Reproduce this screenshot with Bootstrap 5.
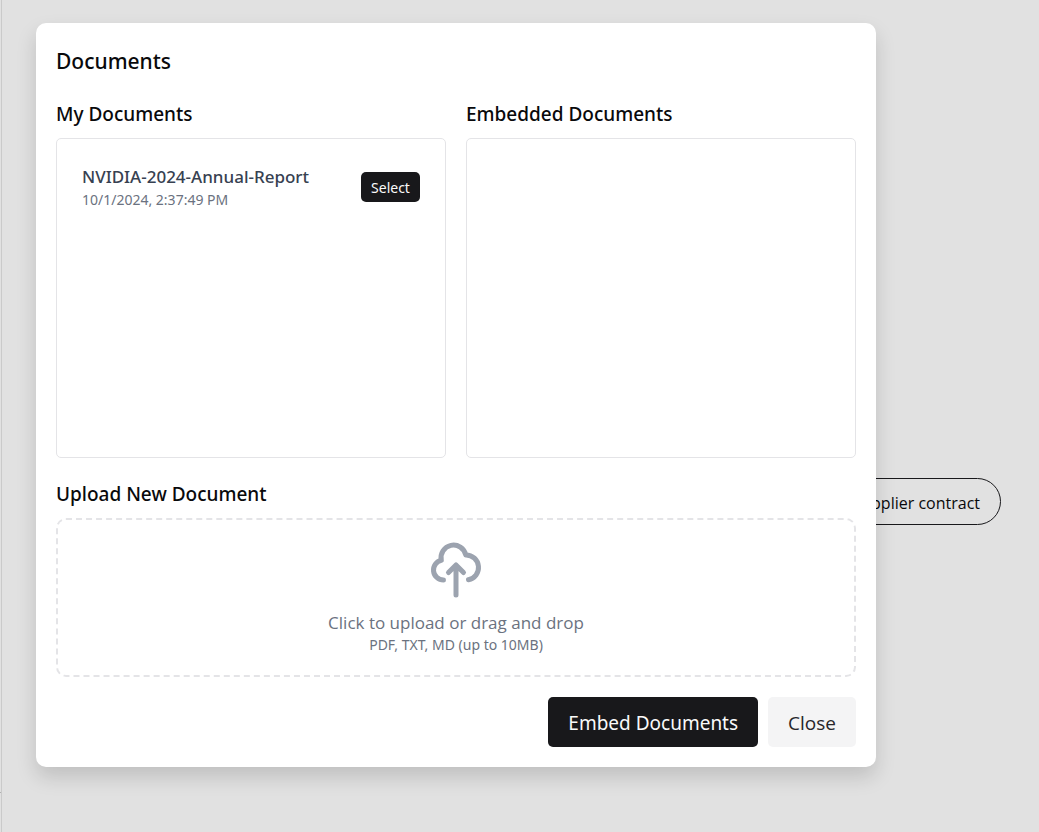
<!DOCTYPE html>
<html lang="en">
<head>
<meta charset="utf-8">
<meta name="viewport" content="width=device-width, initial-scale=1">
<title>Documents</title>
<link href="https://cdn.jsdelivr.net/npm/bootstrap@5.3.0/dist/css/bootstrap.min.css" rel="stylesheet">
<style>
  body { font-family: "Open Sans", "Noto Sans", sans-serif; background: #e1e1e1; color: #09090b; }
  .side-rail { width: 2px; border-right: 1px solid #cacaca; }
  .side-rail hr { margin: 792px 0 0; border-color: #b0b0b0; opacity: 1; }
  .prompts { padding: 478px 38px 0 0; }
  .prompt-pill { height: 47px; padding: 2px 20px 0; border: 1px solid #18181b; font-size: 16px; color: #09090b; }
  .overlay { padding: 23px 36px; }
  .dialog-panel { max-width: 840px; padding: 20px; border-radius: 10px; box-shadow: 0 10px 20px rgba(0,0,0,.15); }
  .dialog-title, .section-title, .doc-name, .doc-date, .drop-hint, .btn-dark-fill { font-family: "Noto Sans", "Open Sans", sans-serif; }
  .dialog-title { font-size: 21px; line-height: 37px; font-weight: 500; margin-bottom: 19px; }
  .section-title { font-size: 19px; line-height: 30px; font-weight: 500; margin-bottom: 9px; }
  .columns { --bs-gutter-x: 20px; margin-bottom: 21px; }
  .doc-list { height: 320px; padding: 25px; border: 1px solid #e4e4e7; border-radius: 5px; }
  .doc-name { font-size: 17px; line-height: 25px; font-weight: 500; color: #374151; }
  .doc-date { font-size: 14px; line-height: 21px; color: #6b7280; }
  .btn-dark-fill { --bs-btn-color: #fafafa; --bs-btn-bg: #18181b; --bs-btn-hover-color: #fff; --bs-btn-hover-bg: #303034; border: 0; border-radius: 5px; }
  .btn-light-fill { --bs-btn-color: #27272a; --bs-btn-bg: #f4f4f5; --bs-btn-hover-bg: #e8e8ea; border: 0; border-radius: 5px; }
  .btn-select { width: 59px; height: 30px; padding: 0; font-size: 14px; }
  .drop-zone { padding: 20px; border: 2px dashed #e4e4e7; border-radius: 10px; color: #6b7280; cursor: pointer; margin-bottom: 20px; }
  .drop-zone svg { color: #9ca3af; margin-bottom: 10px; }
  .drop-main { font-size: 17px; line-height: 25px; }
  .drop-hint { font-size: 14px; line-height: 20px; }
  .dialog-actions { gap: 10px; }
  .dialog-actions .btn { height: 50px; padding: 2px 20px 0; font-size: 19px; }
</style>
</head>
<body>
<div class="d-flex min-vh-100">
  <aside class="side-rail flex-shrink-0"><hr></aside>
  <main class="prompts flex-grow-1 d-flex justify-content-end align-items-start">
    <button type="button" class="prompt-pill rounded-pill bg-transparent text-nowrap">Review supplier contract</button>
  </main>
</div>
<div class="overlay position-absolute top-0 start-0 w-100">
  <section class="dialog-panel bg-white" role="dialog" aria-labelledby="dialog-title">
    <h2 class="dialog-title" id="dialog-title">Documents</h2>
    <div class="row columns">
      <div class="col-6">
        <h3 class="section-title">My Documents</h3>
        <div class="doc-list">
          <div class="d-flex justify-content-between align-items-center">
            <div>
              <div class="doc-name">NVIDIA-2024-Annual-Report</div>
              <div class="doc-date">10/1/2024, 2:37:49 PM</div>
            </div>
            <button type="button" class="btn btn-dark-fill btn-select">Select</button>
          </div>
        </div>
      </div>
      <div class="col-6">
        <h3 class="section-title">Embedded Documents</h3>
        <div class="doc-list"></div>
      </div>
    </div>
    <h3 class="section-title">Upload New Document</h3>
    <label class="drop-zone d-flex flex-column align-items-center" for="upload">
      <svg width="60" height="60" viewBox="0 0 24 24" fill="none" stroke="currentColor" stroke-width="2" stroke-linecap="round" stroke-linejoin="round" aria-hidden="true"><path d="M7 16a4 4 0 01-.88-7.903A5 5 0 1115.9 6L16 6a5 5 0 011 9.9M15 13l-3-3m0 0l-3 3m3-3v12"/></svg>
      <span class="drop-main">Click to upload or drag and drop</span>
      <span class="drop-hint">PDF, TXT, MD (up to 10MB)</span>
    </label>
    <input class="visually-hidden" type="file" id="upload" accept=".pdf,.txt,.md">
    <div class="dialog-actions d-flex justify-content-end">
      <button type="button" class="btn btn-dark-fill">Embed Documents</button>
      <button type="button" class="btn btn-light-fill">Close</button>
    </div>
  </section>
</div>
<script src="https://cdn.jsdelivr.net/npm/bootstrap@5.3.0/dist/js/bootstrap.bundle.min.js"></script>
</body>
</html>
